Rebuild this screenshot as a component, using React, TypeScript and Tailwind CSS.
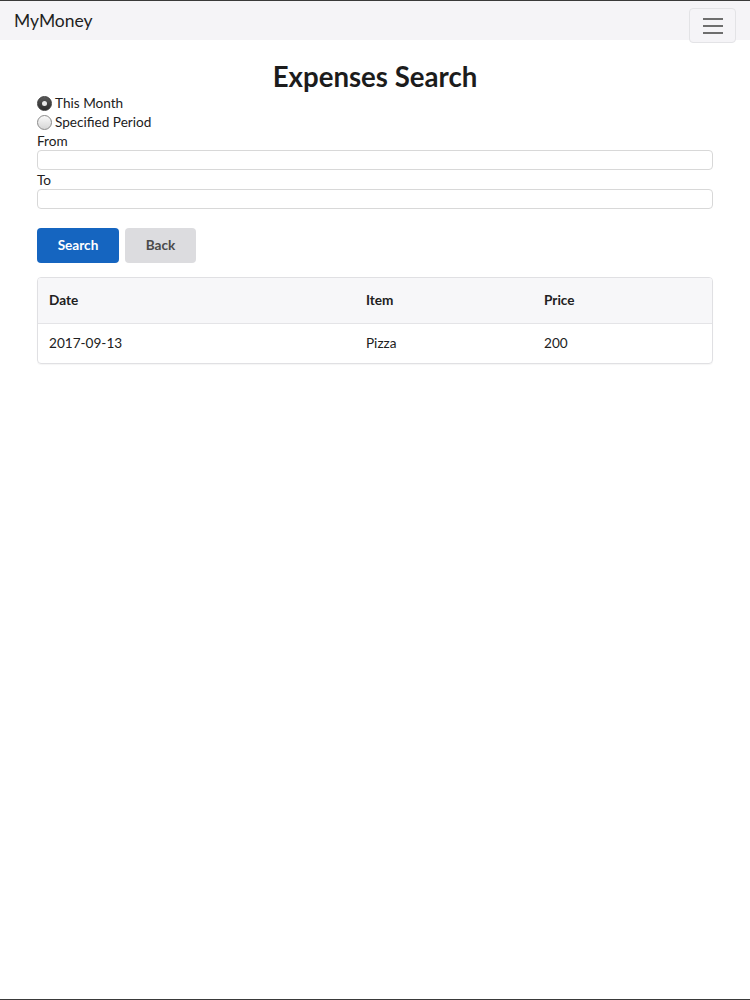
import { useState } from "react";

type Expense = { date: string; item: string; price: number };

const rows: Expense[] = [{ date: "2017-09-13", item: "Pizza", price: 200 }];

function Radio({ checked, label, onClick }: { checked: boolean; label: string; onClick: () => void }) {
  return (
    <label className="flex h-[19px] cursor-pointer items-center gap-[3px]" onClick={onClick}>
      {checked ? (
        <span className="flex h-[15px] w-[15px] items-center justify-center rounded-full border border-[#3d3d3d] bg-gradient-to-b from-[#5a5a5a] to-[#2c2c2c]">
          <span className="h-[5px] w-[5px] rounded-full bg-[#e8e8e8]" />
        </span>
      ) : (
        <span className="h-[15px] w-[15px] rounded-full border border-[#8a8a8a] bg-gradient-to-b from-[#fafafa] to-[#d6d6d6]" />
      )}
      <span>{label}</span>
    </label>
  );
}

export default function App() {
  const [mode, setMode] = useState<"month" | "period">("month");

  return (
    <div className="flex h-[1000px] flex-col border-y border-[#3a3a3a] bg-white font-['Lato',sans-serif] text-[13.6px] text-[#212121]">
      <nav className="flex h-[39px] items-start justify-between bg-[#f5f4f7] pl-[14px] pr-[14px]">
        <span className="mt-[9px] text-[17.5px] leading-[22px] text-[#1f1f1f]">MyMoney</span>
        <button className="mt-[7px] flex h-[35px] w-[47px] flex-col items-center justify-center gap-[5px] rounded-[4px] border border-[#e3e3e6] bg-[#f5f4f7]">
          <span className="h-[2px] w-[20px] bg-[#6e6e6e]" />
          <span className="h-[2px] w-[20px] bg-[#6e6e6e]" />
          <span className="h-[2px] w-[20px] bg-[#6e6e6e]" />
        </button>
      </nav>

      <main className="px-[37px]">
        <h1 className="mt-[20px] text-center text-[27.6px] font-bold leading-[34px] text-[#1c1c1c]">Expenses Search</h1>

        <div>
          <Radio checked={mode === "month"} label="This Month" onClick={() => setMode("month")} />
          <Radio checked={mode === "period"} label="Specified Period" onClick={() => setMode("period")} />
        </div>

        <label className="block h-[18px] leading-[19px]">From</label>
        <input className="block h-[20px] w-full rounded-[4px] border border-[#d8d8d8] bg-white" />
        <label className="block h-[19px] leading-[20px]">To</label>
        <input className="block h-[20px] w-full rounded-[4px] border border-[#d8d8d8] bg-white" />

        <div className="mt-[19px] flex gap-[6px]">
          <button className="h-[35px] w-[82px] rounded-[4px] bg-[#1565c0] font-bold text-white">Search</button>
          <button className="h-[35px] w-[71px] rounded-[4px] bg-[#dcdcdf] font-bold text-[#4a4a4a]">Back</button>
        </div>

        <div className="mt-[14px] overflow-hidden rounded-[4px] border border-[#e0e0e3] shadow-[0_1px_1px_rgba(0,0,0,0.04)]">
          <table className="w-full table-fixed border-collapse text-left">
            <colgroup>
              <col className="w-[328px]" />
              <col className="w-[178px]" />
              <col />
            </colgroup>
            <thead>
              <tr className="h-[45px] border-b border-[#e4e4e7] bg-[#f7f7f9]">
                <th className="pl-[11px] font-bold">Date</th>
                <th className="font-bold">Item</th>
                <th className="font-bold">Price</th>
              </tr>
            </thead>
            <tbody>
              {rows.map((r) => (
                <tr key={r.date + r.item} className="h-[40px]">
                  <td className="pl-[11px]">{r.date}</td>
                  <td>{r.item}</td>
                  <td>{r.price}</td>
                </tr>
              ))}
            </tbody>
          </table>
        </div>
      </main>
    </div>
  );
}
